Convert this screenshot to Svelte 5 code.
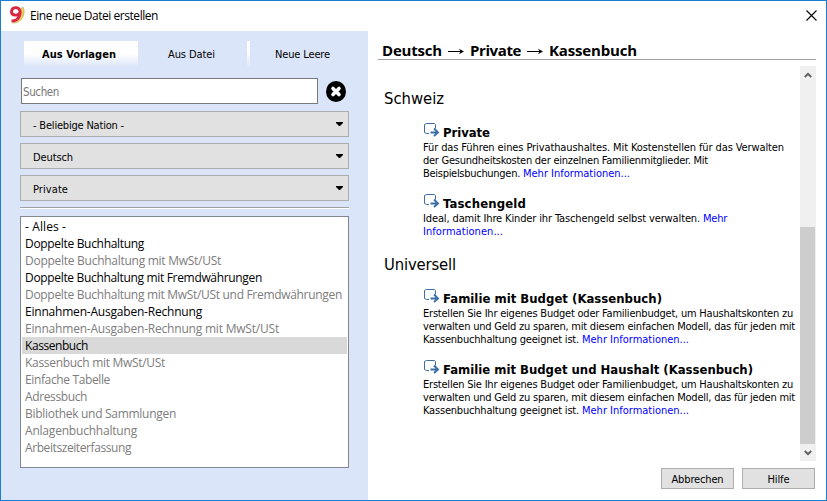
<script>
  const combos = [
    { text: '- Beliebige Nation -', w: 91 },
    { text: 'Deutsch', w: 40 },
    { text: 'Private', w: 35 }
  ];
  const types = [
    { text: '- Alles -', w: 41, on: true },
    { text: 'Doppelte Buchhaltung', w: 119, on: true },
    { text: 'Doppelte Buchhaltung mit MwSt/USt', w: 196 },
    { text: 'Doppelte Buchhaltung mit Fremdwährungen', w: 237, on: true },
    { text: 'Doppelte Buchhaltung mit MwSt/USt und Fremdwährungen', w: 317 },
    { text: 'Einnahmen-Ausgaben-Rechnung', w: 177, on: true },
    { text: 'Einnahmen-Ausgaben-Rechnung mit MwSt/USt', w: 254 },
    { text: 'Kassenbuch', w: 63, on: true, selected: true },
    { text: 'Kassenbuch mit MwSt/USt', w: 140 },
    { text: 'Einfache Tabelle', w: 85 },
    { text: 'Adressbuch', w: 62 },
    { text: 'Bibliothek und Sammlungen', w: 151 },
    { text: 'Anlagenbuchhaltung', w: 112 },
    { text: 'Arbeitszeiterfassung', w: 106 }
  ];
  const budget = [
    [{ text: 'Erstellen Sie Ihr eigenes Budget oder Familienbudget, um Haushaltskonten zu', w: 370 }],
    [{ text: 'verwalten und Geld zu sparen, mit diesem einfachen Modell, das für jeden mit', w: 372 }],
    [{ text: 'Kassenbuchhaltung geeignet ist.', w: 156 }, { text: 'Mehr Informationen...', w: 107, link: true }]
  ];
  const groups = [
    {
      title: 'Schweiz', w: 60,
      items: [
        {
          title: 'Private', w: 47,
          lines: [
            [{ text: 'Für das Führen eines Privathaushaltes. Mit Kostenstellen für das Verwalten', w: 361 }],
            [{ text: 'der Gesundheitskosten der einzelnen Familienmitglieder. Mit', w: 285 }],
            [{ text: 'Beispielsbuchungen.', w: 97 }, { text: 'Mehr Informationen...', w: 107, link: true }]
          ]
        },
        {
          title: 'Taschengeld', w: 83,
          lines: [
            [{ text: 'Ideal, damit Ihre Kinder ihr Taschengeld selbst verwalten.', w: 277 }, { text: 'Mehr', w: 24, link: true }],
            [{ text: 'Informationen...', w: 80, link: true }]
          ]
        }
      ]
    },
    {
      title: 'Universell', w: 72,
      items: [
        { title: 'Familie mit Budget (Kassenbuch)', w: 219, lines: budget },
        { title: 'Familie mit Budget und Haushalt (Kassenbuch)', w: 310, lines: budget }
      ]
    }
  ];

  // Tracks a label out or in so that it takes the given width.
  function fit(node, width) {
    const natural = node.getBoundingClientRect().width;
    node.style.letterSpacing = (width - natural) / node.textContent.length + 'px';
  }
</script>

<div class="window">
  <header>
    <svg class="logo" width="17" height="18" viewBox="0 0 17 18">
      <path d="M14 1C17.500 7 13 17.500 3.500 17C9 15 13 10 12 2.500Z" fill="#ecd062" stroke="#c0a040" stroke-width=".6" />
      <path d="M10.800 6.800C9.500 10 2.700 10 2.500 5.900C2.300 2.600 5 1.500 7 1.600C11 1.900 12 5.500 10.500 9.800C9.300 13.300 6.500 15 2.500 15.100" fill="none" stroke="#d92742" stroke-width="2.900" />
    </svg>
    <span class="caption"><span use:fit={128}>Eine neue Datei erstellen</span></span>
    <svg class="close" width="11" height="11" viewBox="0 0 11 11"><path d="M.5 .5L10.500 10.500M10.500 .5L.5 10.500" stroke="#000" stroke-width="1.100" /></svg>
  </header>
  <div class="body">
    <aside>
      <nav>
        <div class="tab active"><span use:fit={74}>Aus Vorlagen</span></div>
        <div class="tab second"><span use:fit={47}>Aus Datei</span></div>
        <div class="tab third"><span use:fit={55}>Neue Leere</span></div>
      </nav>
      <div class="search">
        <div class="field"><span use:fit={36}>Suchen</span></div>
        <svg width="20" height="21" viewBox="0 0 20 21">
          <ellipse cx="10" cy="10.500" rx="10" ry="10.500" fill="#000" />
          <path d="M7 7.500L13 13.500M13 7.500L7 13.500" stroke="#fff" stroke-width="3.600" stroke-linecap="round" />
        </svg>
      </div>
      {#each combos as c}
        <div class="combo">
          <span use:fit={c.w}>{c.text}</span>
          <svg width="7" height="4" viewBox="0 0 7 4"><path d="M0 0H7V1L4 4H3L0 1Z" /></svg>
        </div>
      {/each}
      <div class="rule"></div>
      <div class="list">
        {#each types as t}
          <div class="row" class:on={t.on} class:selected={t.selected}><span use:fit={t.w}>{t.text}</span></div>
        {/each}
      </div>
    </aside>
    <main>
      <h1>
        <span use:fit={60}>Deutsch</span>
        {@render arrow()}
        <span use:fit={51}>Private</span>
        {@render arrow()}
        <span use:fit={88}>Kassenbuch</span>
      </h1>
      <div class="scroller">
        <div class="content">
          {#each groups as g}
            <section>
              <h2><span use:fit={g.w}>{g.title}</span></h2>
              {#each g.items as item}
                <article>
                  <h3>
                    <svg width="17" height="15" viewBox="0 0 17 15" fill="none" stroke="#3a6ea5">
                      <path d="M6 11.500H3.500L1.500 10.500V2.500L3.500 1.500H11.500L12.500 2.500V6.500" stroke-width="1" />
                      <path d="M7.500 10.500H15M11 6.500L15 10.500L11 14" stroke-width="1.900" />
                    </svg>
                    <span use:fit={item.w}>{item.title}</span>
                  </h3>
                  {#each item.lines as line}
                    <p>
                      {#each line as part}
                        <span class:link={part.link} use:fit={part.w}>{part.text}</span>
                      {/each}
                    </p>
                  {/each}
                </article>
              {/each}
            </section>
          {/each}
        </div>
        <div class="bar">
          <svg width="8" height="6" viewBox="0 0 8 6"><path d="M.8 5L4 1.800L7.200 5" /></svg>
          <div class="thumb"></div>
          <svg width="8" height="6" viewBox="0 0 8 6"><path d="M.8 1L4 4.200L7.200 1" /></svg>
        </div>
      </div>
      <footer>
        <div class="button"><span use:fit={52}>Abbrechen</span></div>
        <div class="button"><span use:fit={22}>Hilfe</span></div>
      </footer>
    </main>
  </div>
</div>

{#snippet arrow()}
  <svg class="arrow" width="16" height="7" viewBox="0 0 16 7"><path d="M0 3.500H14" stroke="#000" stroke-width="1" /><path d="M11 .8L16 3.500L11 6.200L12.500 3.500Z" /></svg>
{/snippet}

<style>
  :global(body) { margin: 0; }
  .window {
    width: 827px; height: 501px; box-sizing: border-box; border: 1px solid #1a7fd4;
    background: #fff; color: #000; display: flex; flex-direction: column;
    font: 11px/13px "DejaVu Sans Condensed", "DejaVu Sans", sans-serif;
    font-stretch: condensed; overflow: hidden;
  }
  span { white-space: nowrap; display: inline-block; }
  svg { display: block; flex: none; }
  header { height: 30px; display: flex; align-items: center; padding: 0 9px 0 8px; flex: none; box-sizing: border-box; }
  .caption { font: 12px/16px "Open Sans", sans-serif; margin-left: 4px; flex: 1; }
  .logo { margin-top: -2px; }
  .close { margin-top: -1px; }
  .body { display: flex; flex: 1; min-height: 0; }
  aside { width: 367px; box-sizing: border-box; background: #dbe5f9; padding: 10px 19px 0; flex: none; }
  nav { display: flex; height: 26px; margin-left: 4px; line-height: 27px; }
  .tab { box-sizing: border-box; height: 26px; }
  .active { width: 114px; padding-left: 18px; font-weight: bold; background: linear-gradient(#fff 50%, #dbe5f9); }
  .second { width: 109px; padding-left: 30px; }
  .third { flex: 1; padding-left: 25px; border-left: 3px solid; border-image: linear-gradient(#fff 40%, #dbe5f9) 1; }
  .search { display: flex; align-items: center; margin: 11px 0 7px; gap: 8px; padding-left: 1px; }
  .field { width: 297px; height: 26px; box-sizing: border-box; border: 1px solid #7a7a7a; background: #fff; color: #777; line-height: 27px; padding-left: 1px; font-size: 11.5px; }
  .combo { height: 26px; box-sizing: border-box; border: 1px solid #adadad; background: #e1e1e1; margin-bottom: 6px; display: flex; align-items: center; justify-content: space-between; padding: 2px 5px 0 12px; }
  .combo svg { margin-top: -2px; }
  .rule { height: 1px; background: #a0a0a0; border-bottom: 1px solid #fff; }
  .list { margin-top: 7px; height: 252px; box-sizing: border-box; border: 1px solid #828790; background: #fff; padding: 1px; font: 12px/17px "Open Sans", sans-serif; }
  .row { height: 17px; padding-left: 3px; color: #7d7d7d; }
  .on { color: #000; }
  .selected { background: #d9d9d9; }
  main { flex: 1; display: flex; flex-direction: column; padding: 0 10px 0 10px; min-width: 0; }
  h1, h2, h3, p { margin: 0; font-weight: normal; }
  h1 { display: flex; align-items: center; gap: 6px; height: 29px; box-sizing: border-box; padding: 9px 0 0 4px; border-bottom: 1px solid #a0a0a0; font: bold 15px/18px "Open Sans", sans-serif; flex: none; }
  .arrow { margin-top: 4px; }
  .scroller { display: flex; height: 395px; margin-top: 6px; flex: none; }
  .content { flex: 1; padding: 23px 0 0 6px; }
  h2 { font-size: 16.5px; line-height: 20px; }
  section { height: 166px; }
  article { margin: 15px 0 0 39px; }
  article + article { margin-top: 15px; }
  h3 { display: flex; font-size: 13px; line-height: 16px; font-weight: bold; height: 17px; gap: 3px; }
  h3 svg { margin-top: -2px; }
  h3 span { margin-top: 1px; }
  p { display: flex; height: 13px; gap: 3px; }
  .link { color: #0000ff; }
  .bar { width: 16px; background: #f0f0f0; display: flex; flex-direction: column; align-items: center; position: relative; }
  .bar svg { margin-top: 6px; fill: none; stroke: #606060; stroke-width: 2; }
  .thumb { width: 15px; height: 217px; background: #cdcdcd; margin: 149px 1px 0 0; }
  footer { display: flex; justify-content: flex-end; gap: 8px; margin-top: 7px; padding-right: 1px; }
  .button { width: 73px; height: 21px; box-sizing: border-box; border: 1px solid #adadad; background: #e1e1e1; text-align: center; line-height: 21px; }
</style>
